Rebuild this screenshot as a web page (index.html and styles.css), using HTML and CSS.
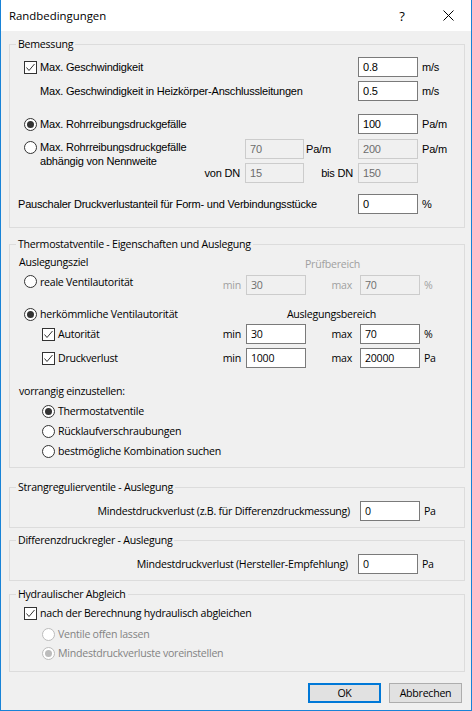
FILE: index.html
```html
<!DOCTYPE html>
<html lang="de">
<head>
<meta charset="utf-8">
<title>Randbedingungen</title>
<link rel="stylesheet" href="styles.css">
</head>
<body>
<div class="window">
  <div class="titlebar">
    <div class="title">Randbedingungen</div>
    <div class="tb-btn help">?</div>
    <div class="tb-btn close"><svg width="11" height="11" viewBox="0 0 11 11"><path d="M0.5 0.5L10.5 10.5M10.5 0.5L0.5 10.5" stroke="#000" stroke-width="1" fill="none"/></svg></div>
  </div>
  <div class="content">
    <fieldset class="group g1">
      <legend>Bemessung</legend>
      <div class="row r1 tah">
        <span class="cb on ml14"><svg width="11" height="11" viewBox="0 0 11 11"><path d="M1.5 5.5L4 8.5L9.5 2" stroke="#333" stroke-width="1" fill="none"/></svg></span>
        <span class="lbl ml3">Max. Geschwindigkeit</span>
        <span class="inp">0.8</span>
        <span class="unit">m/s</span>
      </div>
      <div class="row r2 tah">
        <span class="lbl ml30">Max. Geschwindigkeit in Heizkörper-Anschlussleitungen</span>
        <span class="inp">0.5</span>
        <span class="unit">m/s</span>
      </div>
      <div class="row r3 tah">
        <span class="rb on ml14"></span>
        <span class="lbl ml3">Max. Rohrreibungsdruckgefälle</span>
        <span class="inp">100</span>
        <span class="unit">Pa/m</span>
      </div>
      <div class="row r4 tah">
        <span class="rb ml14"></span>
        <span class="lbl ml3 two">Max. Rohrreibungsdruckgefälle<br>abhängig von Nennweite</span>
        <span class="inp dis w59">70</span>
        <span class="unit mid">Pa/m</span>
        <span class="inp dis">200</span>
        <span class="unit">Pa/m</span>
      </div>
      <div class="row r5 tah">
        <span class="lbl right pr5">von DN</span>
        <span class="inp dis w59">15</span>
        <span class="unit mid right pr5">bis DN</span>
        <span class="inp dis">150</span>
        <span class="unit"></span>
      </div>
      <div class="row r6 tah">
        <span class="lbl ml8">Pauschaler Druckverlustanteil für Form- und Verbindungsstücke</span>
        <span class="inp">0</span>
        <span class="unit">%</span>
      </div>
    </fieldset>

    <fieldset class="group g2">
      <legend>Thermostatventile - Eigenschaften und Auslegung</legend>
      <div class="row h14 top r7">
        <span class="ziel">Auslegungsziel</span>
        <span class="pruef gray">Prüfbereich</span>
      </div>
      <div class="row r8">
        <span class="lgroup">
          <span class="rb ml14"></span>
          <span class="lbl ml3">reale Ventilautorität</span>
        </span>
        <span class="mn gray">min</span>
        <span class="inp dis">30</span>
        <span class="mx gray">max</span>
        <span class="inp dis">70</span>
        <span class="unit2 gray">%</span>
      </div>
      <div class="row h14 r9">
        <span class="rb on ml14"></span>
        <span class="lbl ml3">herkömmliche Ventilautorität</span>
        <span class="bereich">Auslegungsbereich</span>
      </div>
      <div class="row r10">
        <span class="cb on ml32"><svg width="11" height="11" viewBox="0 0 11 11"><path d="M1.5 5.5L4 8.5L9.5 2" stroke="#333" stroke-width="1" fill="none"/></svg></span>
        <span class="lbl ml3">Autorität</span>
        <span class="mn">min</span>
        <span class="inp">30</span>
        <span class="mx">max</span>
        <span class="inp">70</span>
        <span class="unit2">%</span>
      </div>
      <div class="row r11">
        <span class="cb on ml32"><svg width="11" height="11" viewBox="0 0 11 11"><path d="M1.5 5.5L4 8.5L9.5 2" stroke="#333" stroke-width="1" fill="none"/></svg></span>
        <span class="lbl ml3">Druckverlust</span>
        <span class="mn">min</span>
        <span class="inp">1000</span>
        <span class="mx">max</span>
        <span class="inp">20000</span>
        <span class="unit2">Pa</span>
      </div>
      <div class="row h14 r12">
        <span class="lbl ml9">vorrangig einzustellen:</span>
      </div>
      <div class="row h14 r13">
        <span class="rb on ml32"></span>
        <span class="lbl ml3">Thermostatventile</span>
      </div>
      <div class="row h14 r14">
        <span class="rb ml32"></span>
        <span class="lbl ml3">Rücklaufverschraubungen</span>
      </div>
      <div class="row h14 r14">
        <span class="rb ml32"></span>
        <span class="lbl ml3">bestmögliche Kombination suchen</span>
      </div>
    </fieldset>

    <fieldset class="group g3">
      <legend>Strangregulierventile - Auslegung</legend>
      <div class="row r15">
        <span class="lbl right pr10">Mindestdruckverlust (z.B. für Differenzdruckmessung)</span>
        <span class="inp">0</span>
        <span class="unit2">Pa</span>
      </div>
    </fieldset>

    <fieldset class="group g4">
      <legend>Differenzdruckregler - Auslegung</legend>
      <div class="row r15">
        <span class="lbl right pr10">Mindestdruckverlust (Hersteller-Empfehlung)</span>
        <span class="inp">0</span>
        <span class="unit">Pa</span>
      </div>
    </fieldset>

    <fieldset class="group g5">
      <legend>Hydraulischer Abgleich</legend>
      <div class="row h14 r16">
        <span class="cb on ml14"><svg width="11" height="11" viewBox="0 0 11 11"><path d="M1.5 5.5L4 8.5L9.5 2" stroke="#333" stroke-width="1" fill="none"/></svg></span>
        <span class="lbl ml3">nach der Berechnung hydraulisch abgleichen</span>
      </div>
      <div class="row h14 r17">
        <span class="rb dis ml32"></span>
        <span class="lbl ml3 dtext">Ventile offen lassen</span>
      </div>
      <div class="row h14 r18">
        <span class="rb dis on ml32"></span>
        <span class="lbl ml3 dtext">Mindestdruckverluste voreinstellen</span>
      </div>
    </fieldset>

    <div class="buttons">
      <div class="btn default">OK</div>
      <div class="btn">Abbrechen</div>
    </div>
  </div>
</div>
</body>
</html>
```

FILE: styles.css
```css
* { box-sizing: border-box; }
html, body { margin: 0; padding: 0; }
body { width: 472px; height: 711px; overflow: hidden; background: #f0f0f0; }

.window {
  width: 472px;
  height: 711px;
  border: 1px solid #1883d7;
  border-top: none;
  background: #f0f0f0;
  display: flex;
  flex-direction: column;
  font-family: "Open Sans", "Noto Sans", sans-serif;
  font-size: 10.6px;
  letter-spacing: -0.25px;
  color: #000;
}

.titlebar {
  height: 31px;
  flex: none;
  background: #fff;
  display: flex;
  align-items: center;
  padding-left: 8px;
}
.title { flex: 1; font-size: 11.4px; letter-spacing: 0; line-height: 16px; }
.tb-btn { width: 46px; height: 31px; display: flex; align-items: center; justify-content: center; }
.help { font-size: 13px; letter-spacing: 0; }
.close { width: 46px; }

.content { padding: 0 6px 0 8px; }

.group {
  margin: 0;
  padding: 0;
  min-width: 0;
  border: 1px solid #dcdcdc;
}
.group legend {
  margin-left: 6px;
  padding: 0 2px;
  line-height: 15px;
  height: 15px;
}
.g1 { margin-top: 6px; padding-bottom: 13px; }
.g2 { margin-top: 9px; padding-bottom: 9px; }
.g3 { margin-top: 12px; padding-bottom: 6px; }
.g4 { margin-top: 5px; padding-bottom: 6px; }
.g5 { margin-top: 6px; padding-bottom: 11px; }

.row { display: flex; align-items: center; height: 20px; white-space: nowrap; }
.row.h14 { height: 14px; }
.row.top { align-items: flex-start; }

.tah {
  font-family: "Liberation Sans", Arial, sans-serif;
  font-size: 11px;
  letter-spacing: -0.2px;
}

.r1 { margin-top: 5px; }
.r2 { margin-top: 4px; }
.r3 { margin-top: 13px; }
.r4 { margin-top: 5px; align-items: flex-start; }
.r5 { margin-top: 4px; }
.r6 { margin-top: 11px; }
.r7 { margin-top: 3px; }
.r8 { margin-top: 6px; }
.r9 { margin-top: 12px; }
.r10 { margin-top: 3px; }
.r11 { margin-top: 4px; }
.r12 { margin-top: 16px; }
.r13 { margin-top: 6px; }
.r14 { margin-top: 6px; }
.r15 { margin-top: 6px; }
.r16 { margin-top: 4px; }
.r17 { margin-top: 7px; }
.r18 { margin-top: 5px; }

.ml3 { margin-left: 3px; }
.ml8 { margin-left: 8px; }
.ml9 { margin-left: 9px; }
.ml14 { margin-left: 14px; }
.ml30 { margin-left: 30px; }
.ml32 { margin-left: 32px; }
.pr5 { padding-right: 5px; }
.pr10 { padding-right: 10px; }

.lbl { flex: 1; line-height: 14px; }
.lbl.two { margin-top: 1px; }
.right { text-align: right; }

.cb {
  flex: none;
  width: 13px;
  height: 13px;
  border: 1px solid #333;
  background: #fff;
  display: block;
}
.cb svg { display: block; }

.rb {
  flex: none;
  width: 13px;
  height: 13px;
  border: 1px solid #333;
  border-radius: 50%;
  background: #fff;
  position: relative;
}
.r4 .rb { margin-top: 2px; }
.rb.on::after {
  content: "";
  position: absolute;
  left: 2px;
  top: 2px;
  width: 7px;
  height: 7px;
  border-radius: 50%;
  background: #333;
}
.rb.dis { border-color: #bcbcbc; }
.rb.dis.on::after { background: #bcbcbc; }
.dtext { color: #838383; }

.inp {
  flex: none;
  width: 60px;
  height: 20px;
  border: 1px solid #7a7a7a;
  background: #fff;
  padding-left: 4px;
  line-height: 18px;
}
.inp.w59 { width: 59px; }
.inp.dis { border-color: #cccccc; background: #f0f0f0; color: #6d6d6d; }

.unit { flex: none; width: 46px; padding-left: 4px; line-height: 20px; height: 20px; }
.unit.mid { width: 54px; padding-left: 2px; }
.unit.mid.right { padding-left: 0; padding-right: 5px; }
.unit2 { flex: none; width: 44px; padding-left: 4px; }

.gray { color: #a0a0a0; }

.ziel { margin-left: 9px; width: 286px; line-height: 14px; }
.pruef { margin-top: 2px; line-height: 14px; }

.lgroup { flex: 1; display: flex; align-items: center; height: 13px; align-self: flex-start; }
.mn { flex: none; width: 27px; text-align: right; padding-right: 5px; }
.mx { flex: none; width: 54px; text-align: right; padding-right: 8px; }

.bereich { margin-right: 88px; line-height: 14px; }

.buttons {
  display: flex;
  justify-content: flex-end;
  gap: 8px;
  margin-top: 11px;
  margin-right: 3px;
}
.btn {
  width: 73px;
  height: 20px;
  background: #e1e1e1;
  border: 1px solid #adadad;
  display: flex;
  align-items: center;
  justify-content: center;
}
.btn.default { border: 2px solid #0078d7; }
```
